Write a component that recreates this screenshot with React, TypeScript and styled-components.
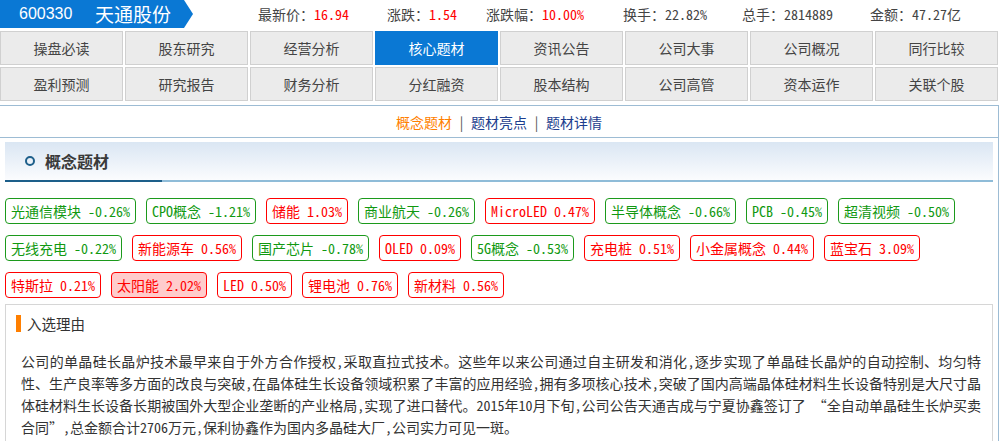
import React from 'react';
import styled, { createGlobalStyle } from 'styled-components';

const GlobalStyle = createGlobalStyle`
    body {
        margin: 0;
        background: #fff;
        color: #333;
        font-family: "Noto Sans Mono CJK SC", "Noto Sans CJK SC", "Liberation Sans", sans-serif;
        font-size: 14px;
    }
`;

const Page = styled.div`
    width: 1000px;
    height: 441px;
    overflow: hidden;
`;

/* ---- quote header ---- */

const TopBar = styled.div`
    display: flex;
    align-items: center;
    height: 28px;
`;

const StockBadge = styled.div`
    width: 193px;
    height: 28px;
    background: #0a78d4;
    clip-path: polygon(0 0, 184px 0, 193px 50%, 184px 100%, 0 100%);
    display: flex;
    align-items: center;
    color: #fff;
`;

const StockCode = styled.span`
    font-family: "Liberation Sans", Arial, sans-serif;
    font-size: 16px;
    margin-left: 19px;
    width: 76px;
`;

const StockName = styled.span`
    font-family: "Noto Sans CJK SC", sans-serif;
    font-size: 19px;
    line-height: 28px;
`;

const Stats = styled.div`
    display: flex;
    margin-left: 65px;
    white-space: nowrap;
`;

type StatProps = {
    $width?: number;
}

const Stat = styled.div<StatProps>`
    width: ${(props: StatProps) => (props.$width ? `${props.$width}px` : 'auto')};
    color: #444;
`;

type StatValueProps = {
    $red: boolean;
}

const StatValue = styled.span<StatValueProps>`
    color: ${(props: StatValueProps) => (props.$red ? '#f00' : '#444')};
`;

/* ---- module tabs ---- */

const TabGrid = styled.div`
    display: grid;
    grid-template-columns: repeat(8, 123px);
    gap: 2px;
    margin-top: 3px;
`;

type TabProps = {
    $active: boolean;
}

const Tab = styled.div<TabProps>`
    height: 34px;
    box-sizing: border-box;
    border: 1px solid ${(props: TabProps) => (props.$active ? '#0a78d4' : '#d0d0d0')};
    background: ${(props: TabProps) => (props.$active ? '#0a78d4' : '#ebebeb')};
    color: ${(props: TabProps) => (props.$active ? '#fff' : '#444')};
    display: flex;
    align-items: center;
    justify-content: center;
    font-size: 14px;
    cursor: pointer;
`;

/* ---- content panel ---- */

const Panel = styled.div`
    margin-top: 4px;
    width: 999px;
    box-sizing: border-box;
    border-top: 1px solid #9dbcd4;
    border-right: 1px solid #9dbcd4;
    padding-bottom: 60px;
`;

const SubNav = styled.div`
    height: 31px;
    border-bottom: 1px solid #9dbcd4;
    display: flex;
    align-items: center;
    justify-content: center;
`;

type SubLinkProps = {
    $current: boolean;
}

const SubLink = styled.span<SubLinkProps>`
    color: ${(props: SubLinkProps) => (props.$current ? '#ff7f00' : '#1c3d8e')};
    cursor: pointer;
`;

const SubDivider = styled.span`
    color: #555;
    margin: 0 6px;
`;

const PanelBody = styled.div`
    padding: 4px 5px 0 5px;
`;

const SectionHeader = styled.div`
    height: 38px;
    display: flex;
    align-items: center;
    background: linear-gradient(to bottom, #dae6f3, #fbfcfe);
    border-bottom: 2px solid transparent;
    border-image: linear-gradient(to right, #1d5f8a 158px, #8fbcd8 158px) 1;
`;

const SectionDot = styled.span`
    width: 10px;
    height: 10px;
    box-sizing: border-box;
    border: 2px solid #1d5f8a;
    border-radius: 50%;
    margin-left: 20px;
    margin-right: 10px;
`;

const SectionTitle = styled.span`
    font-size: 16px;
    font-weight: bold;
    color: #3a3a3a;
`;

const TagList = styled.div`
    display: flex;
    flex-wrap: wrap;
    column-gap: 10px;
    row-gap: 11px;
    margin-top: 16px;
`;

type TagProps = {
    $up: boolean;
    $selected: boolean;
}

const Tag = styled.span<TagProps>`
    height: 26px;
    box-sizing: border-box;
    padding: 0 5px;
    border: 1px solid ${(props: TagProps) => (props.$up ? '#f00' : '#1c9a1c')};
    border-radius: 4px;
    color: ${(props: TagProps) => (props.$up ? '#f00' : '#119911')};
    background: ${(props: TagProps) => (props.$selected ? '#ffcccc' : '#fff')};
    line-height: 24px;
    white-space: pre;
    cursor: pointer;
`;

const ReasonBox = styled.div`
    margin-top: 6px;
    border: 1px solid #d6d6d6;
    padding: 10px 10px 20px 10px;
`;

const ReasonTitle = styled.div`
    display: flex;
    align-items: center;
    height: 17px;
    font-size: 14.5px;
    color: #333;
`;

const ReasonMark = styled.span`
    width: 5px;
    height: 17px;
    background: #ff7f00;
    margin-right: 6px;
`;

const ReasonText = styled.p`
    margin: 18px 0 0 5px;
    width: 960px;
    line-height: 22px;
    text-align: justify;
    color: #333;
`;

const stats = [
    { label: '最新价：', value: '16.94', red: true, width: 129 },
    { label: '涨跌：', value: '1.54', red: true, width: 99 },
    { label: '涨跌幅：', value: '10.00%', red: true, width: 137 },
    { label: '换手：', value: '22.82%', red: false, width: 119 },
    { label: '总手：', value: '2814889', red: false, width: 128 },
    { label: '金额：', value: '47.27亿', red: false },
];

const tabs = [
    '操盘必读', '股东研究', '经营分析', '核心题材', '资讯公告', '公司大事', '公司概况', '同行比较',
    '盈利预测', '研究报告', '财务分析', '分红融资', '股本结构', '公司高管', '资本运作', '关联个股',
];

const concepts: [string, string][] = [
    ['光通信模块', '-0.26%'], ['CPO概念', '-1.21%'], ['储能', '1.03%'], ['商业航天', '-0.26%'],
    ['MicroLED', '0.47%'], ['半导体概念', '-0.66%'], ['PCB', '-0.45%'], ['超清视频', '-0.50%'],
    ['无线充电', '-0.22%'], ['新能源车', '0.56%'], ['国产芯片', '-0.78%'], ['OLED', '0.09%'],
    ['5G概念', '-0.53%'], ['充电桩', '0.51%'], ['小金属概念', '0.44%'], ['蓝宝石', '3.09%'],
    ['特斯拉', '0.21%'], ['太阳能', '2.02%'], ['LED', '0.50%'], ['锂电池', '0.76%'], ['新材料', '0.56%'],
];

const reason = '公司的单晶硅长晶炉技术最早来自于外方合作授权,采取直拉式技术。这些年以来公司通过自主研发和消化,逐步实现了单晶硅长晶炉的自动控制、均匀特性、生产良率等多方面的改良与突破,在晶体硅生长设备领域积累了丰富的应用经验,拥有多项核心技术,突破了国内高端晶体硅材料生长设备特别是大尺寸晶体硅材料生长设备长期被国外大型企业垄断的产业格局,实现了进口替代。2015年10月下旬,公司公告天通吉成与宁夏协鑫签订了 “全自动单晶硅生长炉买卖合同”,总金额合计2706万元,保利协鑫作为国内多晶硅大厂,公司实力可见一斑。';

const App: React.FC = () => {
    const activeTab = '核心题材';
    const selectedConcept = '太阳能';

    return (
        <Page>
            <GlobalStyle />
            <TopBar>
                <StockBadge>
                    <StockCode>600330</StockCode>
                    <StockName>天通股份</StockName>
                </StockBadge>
                <Stats>
                    {stats.map((s) => (
                        <Stat key={s.label} $width={s.width}>
                            {s.label}
                            <StatValue $red={s.red}>{s.value}</StatValue>
                        </Stat>
                    ))}
                </Stats>
            </TopBar>

            <TabGrid>
                {tabs.map((t) => (
                    <Tab key={t} $active={t === activeTab}>{t}</Tab>
                ))}
            </TabGrid>

            <Panel>
                <SubNav>
                    <SubLink $current>概念题材</SubLink>
                    <SubDivider>|</SubDivider>
                    <SubLink $current={false}>题材亮点</SubLink>
                    <SubDivider>|</SubDivider>
                    <SubLink $current={false}>题材详情</SubLink>
                </SubNav>

                <PanelBody>
                    <SectionHeader>
                        <SectionDot />
                        <SectionTitle>概念题材</SectionTitle>
                    </SectionHeader>

                    <TagList>
                        {concepts.map(([name, change]) => (
                            <Tag key={name}
                                $up={!change.startsWith('-')}
                                $selected={name === selectedConcept}
                            >
                                {`${name} ${change}`}
                            </Tag>
                        ))}
                    </TagList>

                    <ReasonBox>
                        <ReasonTitle>
                            <ReasonMark />
                            入选理由
                        </ReasonTitle>
                        <ReasonText>{reason}</ReasonText>
                    </ReasonBox>
                </PanelBody>
            </Panel>
        </Page>
    );
};

export default App;
